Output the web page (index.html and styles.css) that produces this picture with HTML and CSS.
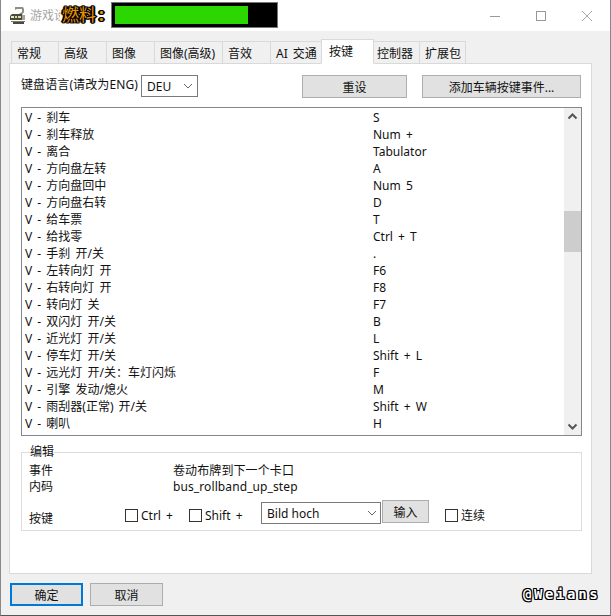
FILE: index.html
```html
<!DOCTYPE html>
<html lang="zh">
<head>
<meta charset="utf-8">
<title>游戏设置</title>
<link rel="stylesheet" href="styles.css">
</head>
<body>
<div class="window">
  <header class="titlebar">
    <svg class="app-icon" width="15" height="17" viewBox="0 0 15 17"><path d="M5 0h8l1 2v3l-2 3H7l5-3V2H7L5 3z" fill="#8f8f8a"/><path d="M2 7h10v6H0V9z" fill="#4b4b38"/><rect x="1" y="9" width="3" height="2" fill="#e8e8d0"/><rect x="5" y="9" width="2" height="2" fill="#e0d890"/><rect x="8" y="9" width="3" height="2" fill="#d8d8b8"/><rect x="12" y="8" width="3" height="5" fill="#a5a59c"/><rect x="1" y="14" width="14" height="1" fill="#77776e"/><rect x="3" y="15" width="11" height="2" fill="#4a4a44"/></svg>
    <span class="title-text">游戏设置</span>
    <div class="win-controls">
      <svg width="46" height="30" viewBox="0 0 46 30"><path d="M18 15.500h10" stroke="#999" fill="none"/></svg>
      <svg width="46" height="30" viewBox="0 0 46 30"><rect x="18.500" y="10.500" width="9" height="9" stroke="#999" fill="none"/></svg>
      <svg width="46" height="30" viewBox="0 0 46 30"><path d="M18 10l10 10M28 10L18 20" stroke="#aaa" fill="none"/></svg>
    </div>
  </header>
  <div class="fuel">
    <span class="fuel-label">燃料<b class="colon">:</b></span>
    <div class="fuel-track"><div class="fuel-fill" style="width:83.6%"></div></div>
  </div>

  <main class="content">
    <nav class="tabs">
      <span class="tab w48">常规</span>
      <span class="tab w49">高级</span>
      <span class="tab w49">图像</span>
      <span class="tab w69">图像(高级)</span>
      <span class="tab w49">音效</span>
      <span class="tab w52">AI 交通</span>
      <span class="tab active">按键</span>
      <span class="tab w47 narrow">控制器</span>
      <span class="tab w47">扩展包</span>
    </nav>
    <section class="panel">
      <div class="lang-row">
        <span class="lang-label">键盘语言(请改为ENG)</span>
        <div class="select lang-select"><span>DEU</span><svg class="chev" width="10" height="6" viewBox="0 0 10 6"><path d="M1 1l4 4 4-4" stroke="#666" fill="none"/></svg></div>
        <button class="btn reset-btn">重设</button>
        <button class="btn add-btn">添加车辆按键事件...</button>
      </div>

      <div class="listbox">
        <div class="rows">
          <div class="row"><span class="c1">V - 刹车</span><span>S</span></div>
          <div class="row"><span class="c1">V - 刹车释放</span><span>Num +</span></div>
          <div class="row"><span class="c1">V - 离合</span><span>Tabulator</span></div>
          <div class="row"><span class="c1">V - 方向盘左转</span><span>A</span></div>
          <div class="row"><span class="c1">V - 方向盘回中</span><span>Num 5</span></div>
          <div class="row"><span class="c1">V - 方向盘右转</span><span>D</span></div>
          <div class="row"><span class="c1">V - 给车票</span><span>T</span></div>
          <div class="row"><span class="c1">V - 给找零</span><span>Ctrl + T</span></div>
          <div class="row"><span class="c1">V - 手刹 开/关</span><span>.</span></div>
          <div class="row"><span class="c1">V - 左转向灯 开</span><span>F6</span></div>
          <div class="row"><span class="c1">V - 右转向灯 开</span><span>F8</span></div>
          <div class="row"><span class="c1">V - 转向灯 关</span><span>F7</span></div>
          <div class="row"><span class="c1">V - 双闪灯 开/关</span><span>B</span></div>
          <div class="row"><span class="c1">V - 近光灯 开/关</span><span>L</span></div>
          <div class="row"><span class="c1">V - 停车灯 开/关</span><span>Shift + L</span></div>
          <div class="row"><span class="c1">V - 远光灯 开/关：车灯闪烁</span><span>F</span></div>
          <div class="row"><span class="c1">V - 引擎 发动/熄火</span><span>M</span></div>
          <div class="row"><span class="c1">V - 雨刮器(正常) 开/关</span><span>Shift + W</span></div>
          <div class="row"><span class="c1">V - 喇叭</span><span>H</span></div>
        </div>
        <div class="scrollbar">
          <svg width="17" height="17" viewBox="0 0 17 17"><path d="M4.500 10.500l4-4 4 4" stroke="#555" stroke-width="2" fill="none"/></svg>
          <div class="track"><div class="thumb"></div></div>
          <svg width="17" height="17" viewBox="0 0 17 17"><path d="M4.500 6.500l4 4 4-4" stroke="#555" stroke-width="2" fill="none"/></svg>
        </div>
      </div>

      <fieldset class="edit">
        <legend>编辑</legend>
        <div class="info first"><span class="info-label">事件</span><span>卷动布牌到下一个卡口</span></div>
        <div class="info"><span class="info-label">内码</span><span>bus_rollband_up_step</span></div>
        <div class="key-row">
          <span class="key-label">按键</span>
          <label class="check ctrl"><i class="box"></i>Ctrl +</label>
          <label class="check shift"><i class="box"></i>Shift +</label>
          <div class="select key-select"><span>Bild hoch</span><svg class="chev" width="10" height="6" viewBox="0 0 10 6"><path d="M1 1l4 4 4-4" stroke="#666" fill="none"/></svg></div>
          <button class="btn input-btn">输入</button>
          <label class="check cont"><i class="box"></i>连续</label>
        </div>
      </fieldset>
    </section>
    <footer class="actions">
      <button class="btn ok">确定</button>
      <button class="btn cancel">取消</button>
    </footer>
  </main>
  <div class="watermark">@Weians</div>
</div>
</body>
</html>
```
FILE: styles.css
```css
* { box-sizing: border-box; }
html, body { margin: 0; padding: 0; }
body {
  width: 611px;
  height: 616px;
  overflow: hidden;
  background: #fff;
  font-family: "Noto Sans", "Noto Sans CJK SC", sans-serif;
  font-size: 12px;
  color: #111;
}
.window {
  position: relative;
  width: 611px;
  height: 616px;
  background: #f0f0f0;
  border-left: 1px solid #888;
  border-right: 1px solid #888;
  border-bottom: 1px solid #555;
}
.titlebar {
  height: 31px;
  background: #fff;
  display: flex;
  align-items: center;
  padding-left: 9px;
}
.app-icon { margin-top: -1px; }
.title-text {
  margin-left: 5px;
  width: 30px;
  overflow: hidden;
  white-space: nowrap;
  color: #a5a5a5;
  font-size: 12px;
  margin-top: -2px;
}
.win-controls { margin-left: auto; display: flex; }

.fuel {
  position: absolute;
  left: 59px;
  top: 2px;
  display: flex;
  align-items: center;
}
.fuel-label {
  width: 51px;
  padding-left: 2px;
  font-size: 17px;
  line-height: 24px;
  color: #e89500;
  white-space: nowrap;
  text-shadow: 1px 0 #000, -1px 0 #000, 0 1px #000, 0 -1px #000, 1px 1px #000, -1px -1px #000, 1px -1px #000, -1px 1px #000, 2px 0 #000, -2px 0 #000;
}
.colon { margin-left: 3px; font-weight: 700; }
.fuel-track {
  width: 167px;
  height: 26px;
  background: #000;
  border: 1px solid #777;
  padding: 3px;
}
.fuel-fill { height: 18px; background: #2cd600; }

.content { padding: 8px 0 0 8px; }
.tabs { display: flex; height: 24px; padding-left: 2px; align-items: flex-end; position: relative; z-index: 1; }
.tab {
  height: 22px;
  background: #f0f0f0;
  border: 1px solid #d9d9d9;
  border-bottom: 0;
  margin-right: -1px;
  padding: 3px 0 0 5px;
  line-height: 18px;
  white-space: nowrap;
  word-spacing: 2px;
}
.w47 { width: 47px; }
.w48 { width: 48px; }
.w49 { width: 49px; }
.w52 { width: 52px; }
.w69 { width: 69px; }
.narrow { padding-left: 3px; }
.active {
  width: 53px;
  height: 25px;
  background: #fff;
  padding: 3px 0 0 7px;
  border-bottom: 1px solid #fff;
  margin-bottom: -1px;
}
.panel {
  height: 511px;
  width: 583px;
  background: #fff;
  border: 1px solid #d9d9d9;
  padding: 0 9px 0 11px;
}
.lang-row { height: 43px; display: flex; align-items: flex-start; padding-top: 11px; }
.lang-label { line-height: 20px; width: 120px; white-space: nowrap; letter-spacing: 0.1px; }
.select {
  display: flex;
  align-items: center;
  justify-content: space-between;
  background: #fff;
  border: 1px solid #7a7a7a;
  padding: 0 3px 0 5px;
}
.lang-select { width: 57px; height: 22px; }
.lang-select .chev { margin-right: 1px; }
.chev { flex: none; }
.btn {
  font: inherit;
  color: #111;
  background: #e1e1e1;
  border: 1px solid #adadad;
  padding: 0;
}
.reset-btn { width: 105px; height: 23px; margin-left: 104px; }
.add-btn { width: 159px; height: 23px; margin-left: 15px; }

.listbox {
  width: 561px;
  height: 329px;
  border: 1px solid #828790;
  display: flex;
  justify-content: space-between;
  overflow: hidden;
}
.rows { padding-left: 3px; padding-top: 1px; width: 542px; word-spacing: 2px; }
.row { height: 17px; line-height: 17px; display: flex; white-space: nowrap; }
.c1 { width: 348px; }
.scrollbar { width: 17px; background: #f0f0f0; display: flex; flex-direction: column; }
.track { flex: 1; padding-top: 86px; }
.thumb { height: 41px; background: #cdcdcd; }

.edit {
  margin: 8px 0 0 0;
  padding: 0 7px;
  width: 561px;
  height: 87px;
  border: 1px solid #dcdcdc;
  min-inline-size: 0;
}
.edit legend { padding: 0; margin-left: 1px; line-height: 16px; height: 16px; }
.info { display: flex; height: 16px; line-height: 16px; letter-spacing: 0.1px; }
.first { margin-top: 3px; }
.info-label { width: 144px; }
.key-row { display: flex; height: 24px; align-items: flex-start; margin-top: 7px; }
.key-label { width: 96px; line-height: 20px; padding-top: 7px; }
.check { display: flex; align-items: center; gap: 3px; line-height: 15px; padding-top: 6px; word-spacing: 2px; }
.box { display: block; width: 13px; height: 13px; border: 1px solid #333; background: #fff; }
.ctrl { width: 64px; }
.shift { width: 72px; }
.key-select { width: 120px; height: 22px; }
.input-btn { width: 47px; height: 23px; margin-left: 1px; margin-top: -2px; }
.cont { margin-left: 16px; }

.actions { display: flex; gap: 7px; padding: 9px 0 0 1px; }
.ok { width: 73px; height: 23px; border: 2px solid #0078d7; }
.cancel { width: 73px; height: 23px; }

.watermark {
  position: absolute;
  left: 522px;
  top: 585px;
  font-family: "DejaVu Sans Mono", monospace;
  font-size: 14px;
  line-height: 18px;
  font-weight: 700;
  letter-spacing: 2.6px;
  color: #fff;
  text-shadow: 1px 0 #000, -1px 0 #000, 0 1px #000, 0 -1px #000, 1px 1px #000, -1px -1px #000, 1px -1px #000, -1px 1px #000;
}
```
